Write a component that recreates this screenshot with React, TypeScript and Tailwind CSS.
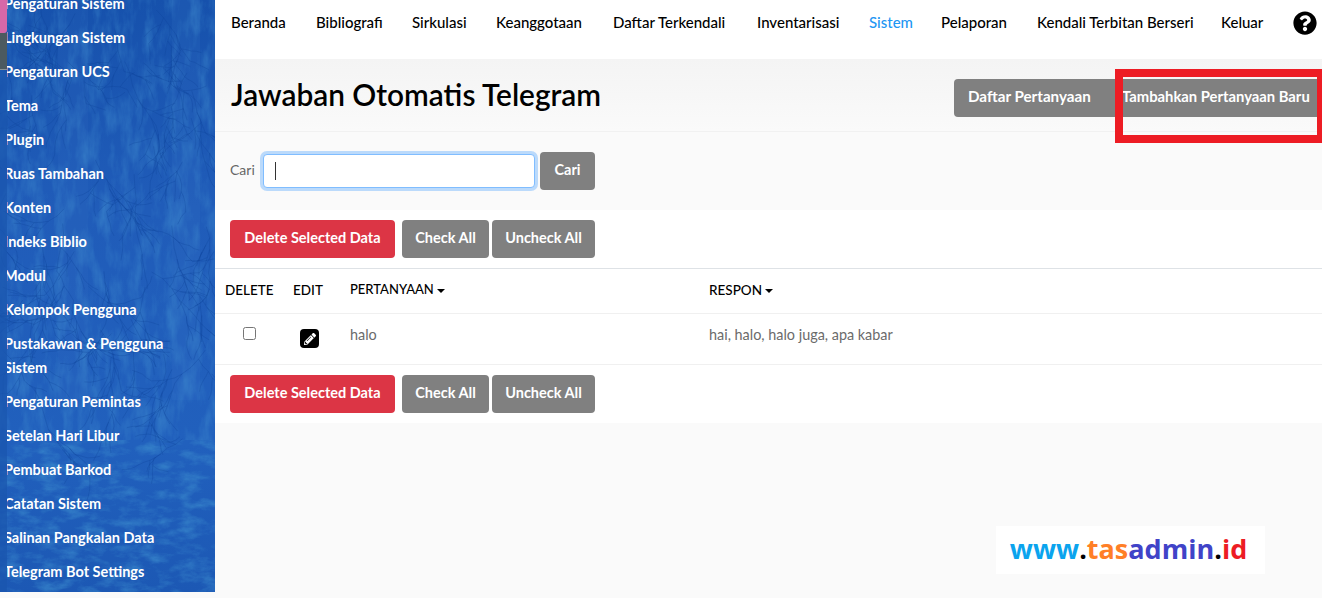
import { FaPencilAlt, FaQuestionCircle } from 'react-icons/fa';

const font = "font-['Lato','Noto_Sans',sans-serif]";

const sideItems = [
  'Pengaturan Sistem',
  'Lingkungan Sistem',
  'Pengaturan UCS',
  'Tema',
  'Plugin',
  'Ruas Tambahan',
  'Konten',
  'Indeks Biblio',
  'Modul',
  'Kelompok Pengguna',
  'Pustakawan & Pengguna Sistem',
  'Pengaturan Pemintas',
  'Setelan Hari Libur',
  'Pembuat Barkod',
  'Catatan Sistem',
  'Salinan Pangkalan Data',
  'Telegram Bot Settings',
];

const navItems = [
  { label: 'Beranda', width: 'w-[85px]', color: 'text-black' },
  { label: 'Bibliografi', width: 'w-[96px]', color: 'text-black' },
  { label: 'Sirkulasi', width: 'w-[84px]', color: 'text-black' },
  { label: 'Keanggotaan', width: 'w-[117px]', color: 'text-black' },
  { label: 'Daftar Terkendali', width: 'w-[144px]', color: 'text-black' },
  { label: 'Inventarisasi', width: 'w-[112px]', color: 'text-black' },
  { label: 'Sistem', width: 'w-[72px]', color: 'text-[#2196f3]' },
  { label: 'Pelaporan', width: 'w-[96px]', color: 'text-black' },
  { label: 'Kendali Terbitan Berseri', width: 'w-[184px]', color: 'text-black' },
  { label: 'Keluar', width: 'w-[72px]', color: 'text-black' },
];

// seeded so the branch texture comes out the same on every load
function makeBranches() {
  let seed = 23;
  const rnd = () => {
    seed = (seed * 16807) % 2147483647;
    return seed / 2147483647;
  };
  const out: string[] = [];
  const grow = (x: number, y: number, angle: number, len: number, depth: number) => {
    let cx = x;
    let cy = y;
    let a = angle;
    let d = `M${cx.toFixed(1)} ${cy.toFixed(1)}`;
    for (let i = 0; i < 4; i++) {
      a += (rnd() - 0.5) * 0.7;
      cx += Math.cos(a) * len;
      cy += Math.sin(a) * len;
      d += `L${cx.toFixed(1)} ${cy.toFixed(1)}`;
      if (depth > 0 && rnd() < 0.6) grow(cx, cy, a + (rnd() - 0.5) * 2, len * 0.7, depth - 1);
    }
    out.push(d);
  };
  for (let i = 0; i < 60; i++) {
    grow(rnd() * 215, rnd() * 440, Math.PI * 0.5 + (rnd() - 0.5) * 1.6, 7 + rnd() * 7, 2);
  }
  return out.join('');
}

const branches = makeBranches();

function SideTexture() {
  return (
    <svg className="absolute inset-0 h-full w-full" viewBox="0 0 215 592" aria-hidden="true">
      <defs>
        <filter id="mottleTop" x="0" y="0" width="100%" height="100%">
          <feTurbulence type="fractalNoise" baseFrequency="0.09 0.03" numOctaves="4" seed="8" />
          <feColorMatrix values="0 0 0 0 0.05  0 0 0 0 0.26  0 0 0 0 0.62  1.8 0 0 0 -0.72" />
        </filter>
        <filter id="mottleBottom" x="0" y="0" width="100%" height="100%">
          <feTurbulence type="fractalNoise" baseFrequency="0.05 0.11" numOctaves="5" seed="3" />
          <feColorMatrix values="0 0 0 0 0.04  0 0 0 0 0.24  0 0 0 0 0.6  2.2 0 0 0 -0.92" />
        </filter>
        <linearGradient id="fade" x1="0" y1="0" x2="0" y2="1">
          <stop offset="0" stopColor="#1651ac" />
          <stop offset="0.35" stopColor="#205cb9" />
          <stop offset="0.75" stopColor="#2160bd" />
          <stop offset="1" stopColor="#1c58b4" />
        </linearGradient>
      </defs>
      <rect width="215" height="592" fill="url(#fade)" />
      <rect x="58" y="0" width="30" height="400" fill="#3a74c8" opacity="0.14" />
      <rect x="172" y="0" width="28" height="400" fill="#3a74c8" opacity="0.18" />
      <rect width="215" height="440" filter="url(#mottleTop)" opacity="0.6" />
      <rect y="440" width="215" height="152" filter="url(#mottleBottom)" opacity="0.75" />
      <path d={branches} stroke="#0b3f97" strokeWidth="0.6" opacity="0.45" fill="none" />
    </svg>
  );
}

function Sidebar() {
  return (
    <aside className="relative flex h-[592px] w-[215px] shrink-0 overflow-hidden bg-[#1d58b6]">
      <SideTexture />
      <div className="relative flex w-[7px] shrink-0 flex-col bg-[#1a55ae]/70">
        <div className="h-[33px] rounded-br-[3px] bg-[#d768a8]" />
        <div className="h-[37px] border-b border-[#8a9497] bg-[#4c5a60]" />
      </div>
      <nav className="relative -mt-[13px] min-w-0 flex-1 overflow-hidden">
        <ul className="-ml-[3px] w-[172px]">
          {sideItems.map((item) => (
            <li key={item} className="py-[5px] text-[14.5px] leading-[24px] font-bold text-white">
              {item}
            </li>
          ))}
        </ul>
      </nav>
    </aside>
  );
}

function TopNav() {
  return (
    <header className="flex h-[59px] items-center bg-white pb-[14px] pl-[16px]">
      {navItems.map((item) => (
        <a key={item.label} className={`${item.width} shrink-0 text-[15px] font-medium whitespace-nowrap ${item.color}`}>
          {item.label}
        </a>
      ))}
      <FaQuestionCircle className="h-[24px] w-[24px] shrink-0 text-black" />
    </header>
  );
}

function GrayBtn({ label, className }: { label: string; className: string }) {
  return (
    <button className={`h-[38px] shrink-0 rounded-[4px] bg-[#808080] pb-[3px] text-[14.5px] font-bold text-white ${className}`}>
      {label}
    </button>
  );
}

function ActionRow() {
  return (
    <div className="flex">
      <button className="h-[38px] w-[165px] rounded-[4px] bg-[#dc3545] pb-[3px] text-[14.5px] font-bold text-white">
        Delete Selected Data
      </button>
      <GrayBtn label="Check All" className="ml-[7px] w-[87px]" />
      <GrayBtn label="Uncheck All" className="ml-[3px] w-[103px]" />
    </div>
  );
}

function Caret() {
  return <span className="ml-[3px] inline-block border-x-[4px] border-t-[4px] border-x-transparent border-t-black align-middle" />;
}

function Main() {
  return (
    <main className="flex min-w-0 flex-1 flex-col">
      <TopNav />
      <section className="flex h-[73px] items-start justify-between border-b border-[#f1f1f1] bg-gradient-to-b from-[#f4f4f4] to-[#fafafa] pl-[16px]">
        <h1 className="mt-[18px] text-[29.8px] leading-[36px] font-semibold text-black">Jawaban Otomatis Telegram</h1>
        <div className="mt-[20px] flex">
          <button className="h-[38px] w-[168px] rounded-l-[4px] bg-[#808080] pb-[3px] pl-[14px] text-left text-[15.2px] font-bold text-white">
            Daftar Pertanyaan
          </button>
          <button className="h-[38px] w-[200px] bg-[#808080] pb-[3px] text-left text-[14.8px] font-bold whitespace-nowrap text-white">
            Tambahkan Pertanyaan Baru
          </button>
        </div>
      </section>
      <section className="flex h-[78px] items-start bg-[#fafafa] pt-[20px] pl-[15px]">
        <label className="mt-[9px] w-[34px] text-[14px] leading-[18px] text-[#666]">Cari</label>
        <div className="mt-[2px] ml-[-1px] flex h-[34px] w-[272px] items-center rounded-[4px] border border-[#80bdff] bg-white pl-[11px] shadow-[0_0_0_3px_rgba(0,123,255,0.25)]">
          <span className="h-[18px] w-px bg-[#333]" />
        </div>
        <GrayBtn label="Cari" className="ml-[5px] w-[55px]" />
      </section>
      <section className="bg-white">
        <div className="h-[59px] border-b border-[#dee2e6] pt-[10px] pl-[15px]">
          <ActionRow />
        </div>
        <div className="flex h-[45px] items-center border-b border-[#f0f0f0] pb-[2px] text-[13.5px] font-medium text-black">
          <span className="ml-[10px] w-[68px]">DELETE</span>
          <span className="w-[57px]">EDIT</span>
          <span className="w-[359px] text-[13px]">
            PERTANYAAN
            <Caret />
          </span>
          <span>
            RESPON
            <Caret />
          </span>
        </div>
        <div className="flex h-[51px] border-b border-[#f0f0f0] text-[14.4px] text-[#6b6b6b]">
          <div className="w-[85px] pt-[13px] pl-[28px]">
            <span className="block h-[13px] w-[13px] rounded-[2.5px] border border-[#767676] bg-white" />
          </div>
          <div className="w-[50px] pt-[15px]">
            <span className="flex h-[19px] w-[19px] items-center justify-center rounded-[4px] bg-black">
              <FaPencilAlt className="h-[12px] w-[12px] text-white" />
            </span>
          </div>
          <span className="w-[359px] pt-[10px]">halo</span>
          <span className="pt-[10px]">hai, halo, halo juga, apa kabar</span>
        </div>
        <div className="h-[58px] pt-[10px] pl-[15px]">
          <ActionRow />
        </div>
      </section>
      <section className="flex flex-1 items-start justify-end bg-[#fafafa] pt-[103px] pr-[57px]">
        <div className="flex h-[48px] w-[269px] items-center justify-center bg-white pr-[4px] pb-[2px] text-[27px] font-bold font-['Open_Sans',sans-serif]">
          <span className="text-[#0ba4ee]">www</span>
          <span className="text-black">.</span>
          <span className="text-[#ff7f27]">tas</span>
          <span className="text-[#4043c8]">admin</span>
          <span className="text-black">.</span>
          <span className="text-[#ed1c24]">id</span>
        </div>
      </section>
    </main>
  );
}

export default function App() {
  return (
    <div className={`relative flex h-[598px] w-[1322px] overflow-hidden bg-[#fafafa] ${font}`}>
      <Sidebar />
      <Main />
      {/* red annotation box drawn over the screenshot */}
      <div className="pointer-events-none absolute top-[69px] left-[1115px] h-[74px] w-[207px] border-y-[8px] border-r-[5px] border-l-[8px] border-[#ed1c24]" />
    </div>
  );
}
